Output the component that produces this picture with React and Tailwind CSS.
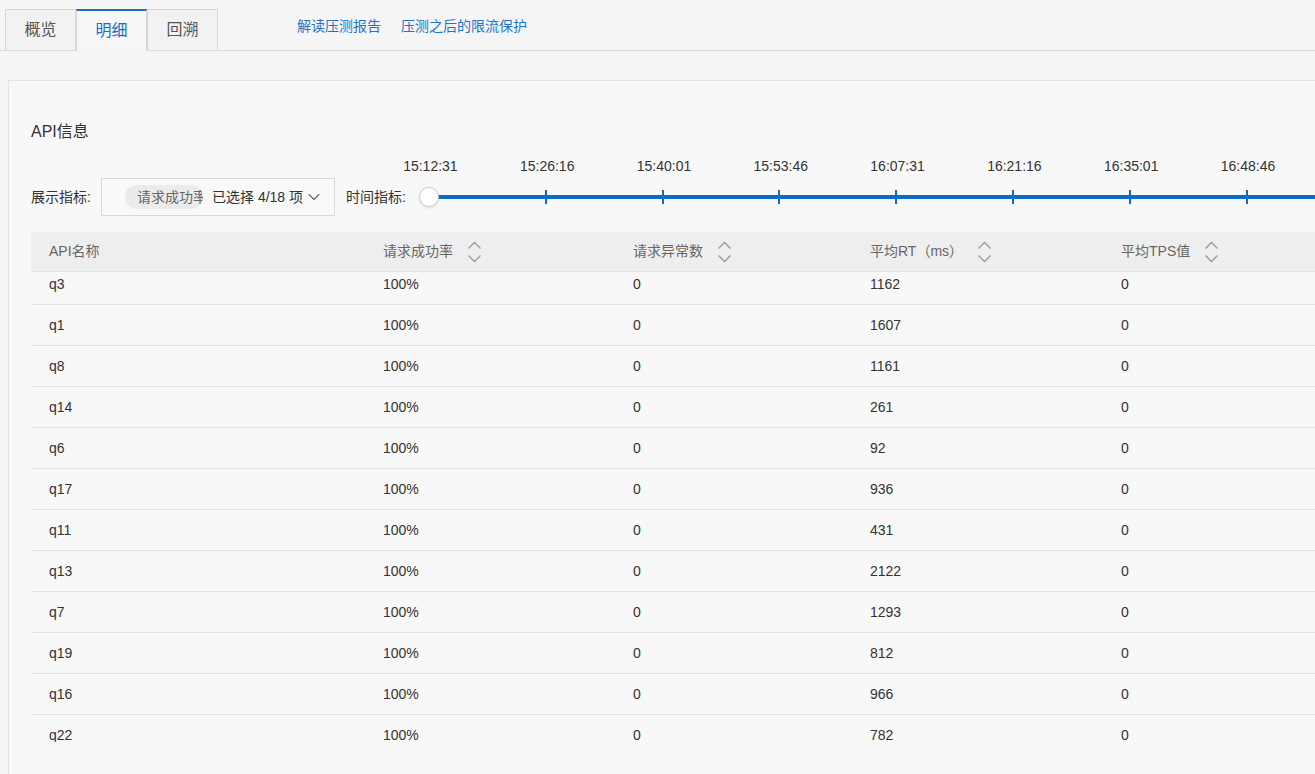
import { ChevronDown } from "lucide-react";

const times = [
  "15:12:31",
  "15:26:16",
  "15:40:01",
  "15:53:46",
  "16:07:31",
  "16:21:16",
  "16:35:01",
  "16:48:46",
];

const rows = [
  ["q3", "100%", "0", "1162", "0"],
  ["q1", "100%", "0", "1607", "0"],
  ["q8", "100%", "0", "1161", "0"],
  ["q14", "100%", "0", "261", "0"],
  ["q6", "100%", "0", "92", "0"],
  ["q17", "100%", "0", "936", "0"],
  ["q11", "100%", "0", "431", "0"],
  ["q13", "100%", "0", "2122", "0"],
  ["q7", "100%", "0", "1293", "0"],
  ["q19", "100%", "0", "812", "0"],
  ["q16", "100%", "0", "966", "0"],
  ["q22", "100%", "0", "782", "0"],
];

const colWidths = ["w-[334px]", "w-[250px]", "w-[237px]", "w-[251px]", "flex-1"];

// 排序图标
const SortIcon = () => (
  <svg width="15" height="24" viewBox="0 0 15 24" fill="none" className="ml-[14px] shrink-0">
    <polyline points="1.5,8.5 7.5,2.5 13.5,8.5" stroke="#9a9a9a" strokeWidth="1.3" />
    <polyline points="1.5,15.5 7.5,21.5 13.5,15.5" stroke="#9a9a9a" strokeWidth="1.3" />
  </svg>
);

const Tab = ({ label, active }) => (
  <div
    className={`w-[71px] flex items-center justify-center text-[16px] border-l border-r border-[#d6d6d6] ${
      active
        ? "bg-[#f7f7f7] text-[#1a6fc4] border-t-2 border-t-[#1a6fc4] -mb-px h-[42px] pb-px"
        : "bg-[#f2f2f2] text-[#555] border-t border-t-[#d6d6d6] h-[41px]"
    }`}
  >
    {label}
  </div>
);

export default function App() {
  return (
    <div
      className="w-full h-[774px] overflow-hidden bg-[#f5f5f5] text-[#333]"
      style={{ fontFamily: '"Liberation Sans", "Noto Sans CJK SC", sans-serif' }}
    >
      {/* Tabs */}
      <div className="pt-[9px] pl-[5px] flex items-end border-b border-[#d9d9d9]">
        <Tab label="概览" />
        <Tab label="明细" active />
        <Tab label="回溯" />
        <div className="flex items-center gap-[20px] ml-[79px] h-[41px] pb-[7px] text-[14px] text-[#1f74c9]">
          <span>解读压测报告</span>
          <span>压测之后的限流保护</span>
        </div>
      </div>

      {/* Card */}
      <div className="ml-[8px] mt-[29px] bg-[#f8f8f8] border-l border-t border-[#e2e2e2] pl-[22px] pt-[40px] h-[700px]">
        <div className="h-[22px] leading-[22px] text-[16px] text-[#333]">API信息</div>

        {/* time labels */}
        <div className="flex ml-[341px] mt-[13px] h-[20px] leading-[20px] text-[14px] text-[#333]">
          {times.map((t) => (
            <div key={t} className="w-[116.8px] shrink-0 text-center">
              {t}
            </div>
          ))}
        </div>

        {/* controls */}
        <div className="flex items-center mt-[2px] h-[38px] text-[14px]">
          <span className="w-[70px] shrink-0">展示指标:</span>
          <div className="w-[234px] h-[38px] shrink-0 border border-[#d9d9d9] bg-[#f9f9f9] flex items-center pl-[23px] pr-[10px]">
            <div className="w-[78px] h-[24px] rounded-full bg-[#ebebeb] pl-[12px] overflow-hidden whitespace-nowrap leading-[24px] text-[#666] shrink-0">
              请求成功率
            </div>
            <span className="ml-[9px] whitespace-nowrap">已选择 4/18 项</span>
            <ChevronDown size={20} strokeWidth={1.3} className="ml-[1px] text-[#666]" />
          </div>
          <span className="ml-[11px] w-[73px] shrink-0">时间指标:</span>
          <div className="relative flex-1 h-[38px]">
            <div className="absolute left-[10px] right-0 top-[17px] h-[4px] bg-[#0a6cc4]" />
            <div className="absolute left-[10px] top-[12px] flex">
              {times.slice(1).map((t) => (
                <div key={t} className="w-[116.8px] shrink-0 flex justify-end">
                  <div className="w-[2px] h-[14px] bg-[#0a6cc4] -mr-px" />
                </div>
              ))}
            </div>
            <div className="absolute left-0 top-[9px] w-[20px] h-[20px] rounded-full bg-white border border-[#d0d0d0] shadow-sm" />
          </div>
        </div>

        {/* table */}
        <div className="mt-[16px]">
          <div className="flex h-[40px] items-center bg-[#eeeeee] border-b border-[#e2e2e2] text-[14px] text-[#666]">
            <div className={`${colWidths[0]} pl-[18px]`}>API名称</div>
            <div className={`${colWidths[1]} pl-[18px] flex items-center`}>
              请求成功率
              <SortIcon />
            </div>
            <div className={`${colWidths[2]} pl-[18px] flex items-center`}>
              请求异常数
              <SortIcon />
            </div>
            <div className={`${colWidths[3]} pl-[18px] flex items-center`}>
              平均RT（ms）
              <SortIcon />
            </div>
            <div className={`${colWidths[4]} pl-[18px] flex items-center`}>
              平均TPS值
              <SortIcon />
            </div>
          </div>
          <div className="h-[470px] overflow-hidden">
            <div className="-mt-[8px]">
              {rows.map((r) => (
                <div
                  key={r[0]}
                  className="flex h-[41px] items-center border-b border-[#e4e4e4] text-[14px] text-[#333]"
                >
                  {r.map((c, i) => (
                    <div key={i} className={`${colWidths[i]} pl-[18px]`}>
                      {c}
                    </div>
                  ))}
                </div>
              ))}
            </div>
          </div>
        </div>
      </div>
    </div>
  );
}
